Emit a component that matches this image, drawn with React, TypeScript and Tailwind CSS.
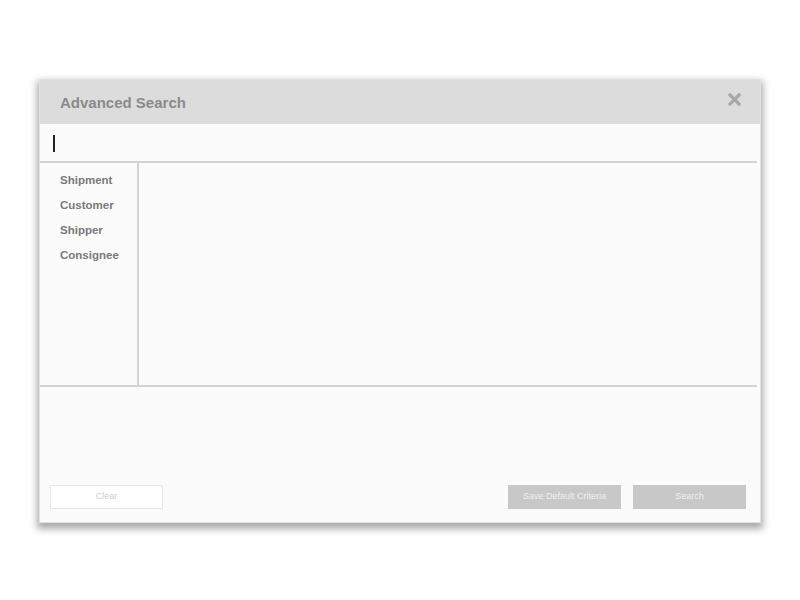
import React from "react";

export default function App() {
  const items = ["Shipment", "Customer", "Shipper", "Consignee"];
  return (
    <div className="w-[800px] h-[600px] bg-white pt-[80px] pl-[40px]" style={{ fontFamily: '"Liberation Sans", Arial, sans-serif' }}>
      <div className="w-[720px] h-[442px] bg-[#fbfbfb] flex flex-col shadow-[0_4px_7px_3px_rgba(0,0,0,0.33)] ring-1 ring-[#e0e0e0]">
        <div className="h-[44px] bg-[#dcdcdc] flex items-center justify-between pl-[20px] pr-[19px] pt-[2px] shrink-0">
          <span className="text-[15px] font-bold text-[#8a8a8a]">Advanced Search</span>
          <svg width="13" height="13" viewBox="0 0 13 13" className="mt-[-8px]">
            <path d="M2 2 L11 11 M11 2 L2 11" stroke="#a8a8a8" strokeWidth="3.2" strokeLinecap="square" />
          </svg>
        </div>
        <div className="h-[39px] flex items-center pl-[13px] pt-[2px] shrink-0 border-b-2 border-[#d4d4d4] mr-[3px]">
          <div className="w-[1.5px] h-[17px] bg-[#222]" />
        </div>
        <div className="h-[224px] flex shrink-0 border-b-2 border-[#d4d4d4] mr-[3px]">
          <div className="w-[99px] border-r-2 border-[#d4d4d4] pl-[20px] pt-[10px] flex flex-col gap-[10px]">
            {items.map((t) => (
              <span key={t} className="text-[11.5px] leading-[15px] font-bold text-[#7a7a7a]">{t}</span>
            ))}
          </div>
          <div className="flex-1" />
        </div>
        <div className="flex-1 flex items-end justify-between px-[10px] pb-[13px]">
          <button className="w-[113px] h-[24px] border border-[#e6e6e6] bg-white text-[9px] text-[#cfcfcf]">Clear</button>
          <div className="flex gap-[12px] pr-[4px]">
            <button className="w-[113px] h-[24px] bg-[#c8c8c8] text-[9px] text-[#efefef]">Save Default Criteria</button>
            <button className="w-[113px] h-[24px] bg-[#c8c8c8] text-[9px] text-[#efefef]">Search</button>
          </div>
        </div>
      </div>
    </div>
  );
}
